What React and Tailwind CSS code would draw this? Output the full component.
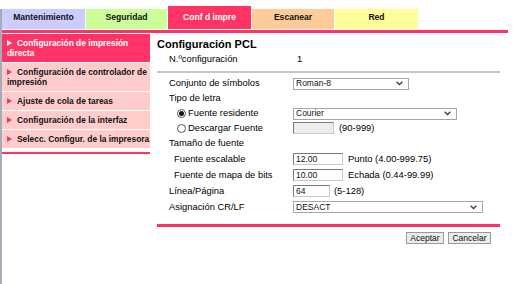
import React from 'react'

const tabs = [
  { label: 'Mantenimiento', bg: 'bg-[#ccccff]', w: 'w-[83px]' },
  { label: 'Seguridad', bg: 'bg-[#ccff99]', w: 'w-[81px]' },
  { label: 'Conf d impre', active: true, w: 'w-[83px]' },
  { label: 'Escanear', bg: 'bg-[#ffcc99]', w: 'w-[82px]' },
  { label: 'Red', bg: 'bg-[#ffff99]', w: 'w-[83px]' },
]

const menu = [
  { label: 'Configuración de impresión directa', active: true },
  { label: 'Configuración de controlador de impresión' },
  { label: 'Ajuste de cola de tareas', single: true },
  { label: 'Configuración de la interfaz', single: true },
  { label: 'Selecc. Configur. de la impresora', single: true },
]

const Arrow = ({ color }) => (
  <svg width="5" height="6" viewBox="0 0 5 6" className="mr-[5px] inline-block align-[0px]">
    <path d="M0 0 L5 3 L0 6 Z" fill={color} />
  </svg>
)

const Select = ({ value, w }) => (
  <div className={`flex h-[12px] ${w} items-center justify-between border border-[#a6a6a6] bg-white pl-[2px] pr-[5px] text-[8.5px] leading-none text-[#111]`}>
    <span>{value}</span>
    <svg width="7" height="5" viewBox="0 0 7 5">
      <path d="M0.7 0.8 L3.5 3.6 L6.3 0.8" fill="none" stroke="#333" strokeWidth="1.3" />
    </svg>
  </div>
)

const Field = ({ value, w, disabled }) => (
  <div
    className={`flex h-[12px] ${w} items-center border border-t-[#7a7a7a] border-l-[#7a7a7a] border-r-[#c8c8c8] border-b-[#c8c8c8] pl-[2px] text-[8.5px] leading-none text-[#111] ${disabled ? 'bg-[#ececec]' : 'bg-white'}`}
  >
    {value}
  </div>
)

const Radio = ({ checked }) => (
  <span className="mr-[2px] inline-flex h-[9px] w-[9px] items-center justify-center rounded-full border border-[#555] bg-white">
    {checked && <span className="h-[5px] w-[5px] rounded-full bg-[#111]" />}
  </span>
)

const Row = ({ h = 'h-[15px]', indent = 'pl-[12px]', label, children }) => (
  <div className={`flex ${h} items-center`}>
    <div className={`flex w-[136px] items-center ${indent}`}>{label}</div>
    <div className="flex items-center gap-[5px]">{children}</div>
  </div>
)

export default function App() {
  return (
    <div className="h-[284px] w-[517px] overflow-hidden bg-white font-['Liberation_Sans',Arial,sans-serif] text-black">
      <div className="mt-[9px] h-[275px] border-l-2 border-[#a4acb8]">
        {/* Tabs */}
        <div className="flex items-start gap-px">
          {tabs.map((t) =>
            t.active ? (
              <div
                key={t.label}
                className={`-mt-[3px] flex h-[23px] ${t.w} items-center justify-center bg-[#ff3366] pb-[1px] pt-[1px] text-[8.6px] font-bold text-white`}
              >
                {t.label}
              </div>
            ) : (
              <div
                key={t.label}
                className={`flex h-[20px] ${t.w} items-center justify-center ${t.bg} pb-[3px] text-[8.6px] font-bold text-[#111]`}
              >
                {t.label}
              </div>
            )
          )}
        </div>
        <div className="mt-px h-[3px] w-[506px] bg-[#ff3366]" />

        <div className="flex">
          {/* Sidebar */}
          <div className="mt-px w-[148px]">
            <div className="flex flex-col gap-px">
              {menu.map((m) => (
                <div
                  key={m.label}
                  className={`py-[4px] pl-[5px] pr-[1px] text-[8.4px] font-bold leading-[10px] ${m.single ? 'overflow-hidden whitespace-nowrap' : ''} ${m.active ? 'bg-[#ff3366] text-white' : 'bg-[#ffcccc] text-[#111]'}`}
                >
                  <Arrow color={m.active ? '#ffffff' : '#ff3366'} />
                  {m.label}
                </div>
              ))}
            </div>
            <div className="mt-[4px] h-[2px] bg-[#ff3366]" />
          </div>

          {/* Main */}
          <div className="ml-[7px] w-[343px] pt-[3px] text-[9.4px]">
            <div className="text-[11px] font-bold leading-[16px]">Configuración PCL</div>
            <div className="flex h-[14px] items-center">
              <div className="w-[136px] pl-[12px]">N.ºconfiguración</div>
              <div className="pl-[4px]">1</div>
            </div>
            <div className="mt-[5px] h-[2px] bg-[#c6c6c6]" />

            <div className="mt-[3px]">
              <Row label="Conjunto de símbolos">
                <Select value="Roman-8" w="w-[116px]" />
              </Row>
              <Row label="Tipo de letra" />
              <Row
                indent="pl-[20px]"
                label={
                  <>
                    <Radio checked />
                    Fuente residente
                  </>
                }
              >
                <Select value="Courier" w="w-[164px]" />
              </Row>
              <Row
                indent="pl-[20px]"
                label={
                  <>
                    <Radio />
                    Descargar Fuente
                  </>
                }
              >
                <Field value="" w="w-[41px]" disabled />
                <span>(90-999)</span>
              </Row>
              <Row label="Tamaño de fuente" />
              <Row h="h-[16px]" indent="pl-[17px]" label="Fuente escalable">
                <Field value="12.00" w="w-[50px]" />
                <span>Punto (4.00-999.75)</span>
              </Row>
              <Row h="h-[16px]" indent="pl-[17px]" label="Fuente de mapa de bits">
                <Field value="10.00" w="w-[50px]" />
                <span>Echada (0.44-99.99)</span>
              </Row>
              <Row h="h-[16px]" label="Línea/Página">
                <Field value="64" w="w-[37px]" />
                <span className="-ml-[1px]">(5-128)</span>
              </Row>
              <Row h="h-[16px]" label="Asignación CR/LF">
                <Select value="DESACT" w="w-[190px]" />
              </Row>
            </div>

            <div className="mt-[9px] h-[3px] bg-[#ff3366]" />
            <div className="mt-[5px] flex justify-end gap-[4px] pr-[9px]">
              <button
                type="button"
                className="h-[12px] w-[38px] border border-[#9a9a9a] bg-[#ececec] text-[8.5px] leading-none text-[#111]"
              >
                Aceptar
              </button>
              <button
                type="button"
                className="h-[12px] w-[43px] border border-[#9a9a9a] bg-[#ececec] text-[8.5px] leading-none text-[#111]"
              >
                Cancelar
              </button>
            </div>
          </div>
        </div>
      </div>
    </div>
  )
}
